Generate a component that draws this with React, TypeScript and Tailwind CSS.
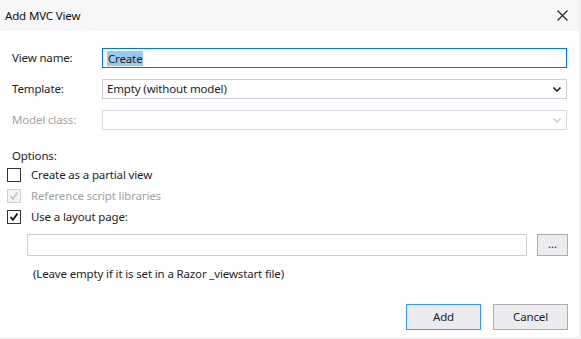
import React from "react";

function Chevron({ color }: { color: string }) {
  return (
    <svg width="8" height="5" viewBox="0 0 8 5" className="shrink-0">
      <polyline points="0.5,0.5 4,4 7.5,0.5" fill="none" stroke={color} strokeWidth="1.6" />
    </svg>
  );
}

function Check({ color }: { color: string }) {
  return (
    <svg width="10" height="10" viewBox="0 0 10 10">
      <polyline points="1.5,5 4,7.8 8.5,1.5" fill="none" stroke={color} strokeWidth="1.8" />
    </svg>
  );
}

function CheckRow({
  label,
  checked,
  disabled,
}: {
  label: string;
  checked?: boolean;
  disabled?: boolean;
}) {
  return (
    <div className="h-[21px] flex items-center">
      <div
        className={
          disabled
            ? "w-[14px] h-[14px] border border-[#cfcfcf] bg-[#f4f4f4] flex items-center justify-center"
            : "w-[14px] h-[14px] border border-[#333333] bg-white flex items-center justify-center"
        }
      >
        {checked && <Check color={disabled ? "#c4c4c4" : "#111111"} />}
      </div>
      <span className={disabled ? "ml-[10px] text-[#a2a2a2]" : "ml-[10px] text-[#1e1e1e]"}>{label}</span>
    </div>
  );
}

export default function App() {
  return (
    <div
      className="w-[581px] h-[339px] bg-[#f0f0f0] overflow-hidden text-[11.5px] leading-[16px] tracking-[-0.15px]"
      style={{ fontFamily: '"Noto Sans", "Open Sans", sans-serif' }}
    >
      <div className="w-[579px] h-[337px] bg-white flex flex-col">
        {/* title bar */}
        <div className="h-[31px] bg-[#f7f7f7] flex items-center justify-between pl-[5px] pr-[11px]">
          <span className="text-[#111111]">Add MVC View</span>
          <svg width="11" height="11" viewBox="0 0 11 11">
            <path d="M0.5 0.5 L10.5 10.5 M10.5 0.5 L0.5 10.5" stroke="#222222" strokeWidth="1.1" />
          </svg>
        </div>

        <div className="flex flex-col pl-[7px] pr-[11px]">
          {/* View name */}
          <div className="mt-[17px] flex items-center h-[20px]">
            <span className="pl-[5px] w-[95px] text-[#1e1e1e]">View name:</span>
            <div className="w-[465px] h-[20px] border border-[#0078d7] flex items-center pl-[4px]">
              <span className="bg-[#99c9ef] text-[#1e1e1e] h-[15px] leading-[15px] px-[1px]">Create</span>
            </div>
          </div>

          {/* Template */}
          <div className="mt-[11px] flex items-center h-[20px]">
            <span className="pl-[5px] w-[95px] text-[#1e1e1e]">Template:</span>
            <div className="w-[465px] h-[20px] border border-[#cccedb] flex items-center justify-between pl-[4px] pr-[5px]">
              <span className="text-[#1e1e1e]">Empty (without model)</span>
              <Chevron color="#1e2a3a" />
            </div>
          </div>

          {/* Model class */}
          <div className="mt-[11px] flex items-center h-[20px]">
            <span className="pl-[5px] w-[95px] text-[#a2a2a2]">Model class:</span>
            <div className="w-[465px] h-[20px] border border-[#d6d7e2] flex items-center justify-end pr-[5px]">
              <Chevron color="#d0d0d8" />
            </div>
          </div>

          {/* Options */}
          <div className="mt-[18px] pl-[5px] h-[16px] text-[#1e1e1e]">Options:</div>

          <div className="flex flex-col">
            <CheckRow label="Create as a partial view" />
            <CheckRow label="Reference script libraries" checked disabled />
            <CheckRow label="Use a layout page:" checked />
          </div>

          {/* layout page */}
          <div className="mt-[7px] ml-[20px] flex items-center gap-[10px]">
            <div className="w-[500px] h-[22px] border border-[#cccedb] bg-white" />
            <button className="w-[31px] h-[22px] border border-[#acacac] bg-[#ececf0] flex items-center justify-center text-[#1e1e1e] leading-none pb-[3px]">
              ...
            </button>
          </div>

          <div className="mt-[10px] pl-[26px] h-[16px] text-[#1e1e1e]">
            (Leave empty if it is set in a Razor _viewstart file)
          </div>

          {/* buttons */}
          <div className="mt-[22px] flex justify-end gap-[12px]">
            <button className="w-[75px] h-[26px] border border-[#3399ff] bg-[#ececf0] text-[#1e1e1e]">Add</button>
            <button className="w-[75px] h-[26px] border border-[#acacac] bg-[#ececf0] text-[#1e1e1e]">Cancel</button>
          </div>
        </div>
      </div>
    </div>
  );
}
